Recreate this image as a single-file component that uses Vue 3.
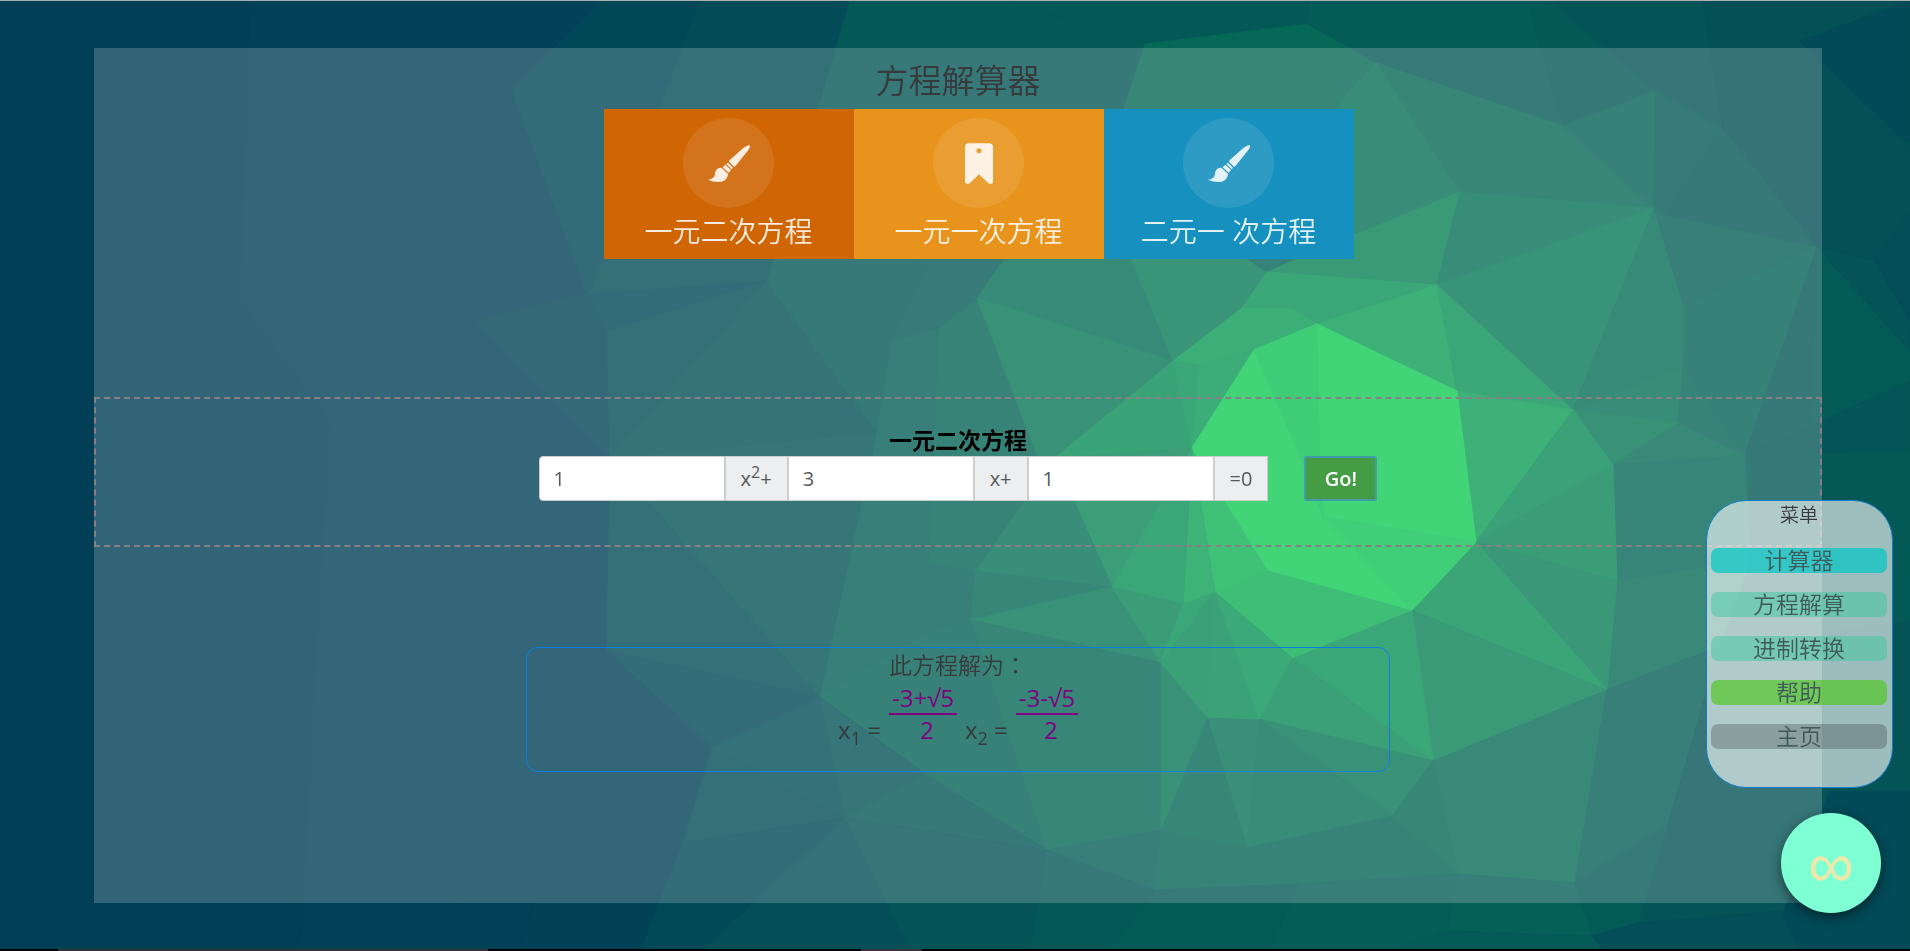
<script setup>
import { ref } from 'vue'

// Low-poly backdrop: each facet is a list of corners and a green level.
const facets = [
  ['600,0 1400,0 1400,760 900,760 600,600', 126],
  ['0,0 250,0 240,300 330,420 300,951 0,951', 101],
  ['250,0 600,0 512,90 587,292 475,320 610,457 607,650 440,951 300,951 330,420 240,300', 102],
  ['512,90 607,330 610,457 475,320 587,292', 105],
  ['250,0 600,0 512,90 440,200 300,120', 103],
  ['600,0 850,0 767,280 610,457 607,330 587,292 512,90', 108],
  ['700,0 850,0 767,280 590,292', 112],
  ['607,330 767,280 610,457', 112],
  ['610,457 607,650 820,696', 112],
  ['607,650 712,747 820,696', 109],
  ['440,951 607,650 712,747 683,842 640,951', 104],
  ['440,951 563,680 607,650 520,951', 103],
  ['712,747 845,817 820,696', 113],
  ['712,747 845,817 683,842', 112],
  ['683,842 845,817 700,951 640,951', 109],
  ['845,817 910,951 700,951', 113],
  ['850,0 1010,0 1145,43 1135,260 930,259 892,340 877,432 767,280', 121],
  ['767,280 877,432 610,457', 116],
  ['767,280 930,259 892,340 877,432', 122],
  ['610,457 877,432 820,696', 117],
  ['892,340 939,327 1055,457 976,570 971,619 930,640 820,696 877,432', 127],
  ['939,327 977,297 1055,457 976,570 930,560', 132],
  ['930,259 1040,240 977,297 939,327 892,340', 124],
  ['820,696 930,630 971,619 1047,849 925,773', 129],
  ['820,696 925,773 845,817', 117],
  ['845,817 925,773 1047,849', 121],
  ['845,817 1047,849 1030,951 910,951', 117],
  ['977,297 1010,250 1135,250 1173,360', 138],
  ['1120,230 1267,245 1267,271 1242,307 1173,360', 149],
  ['1220,240 1340,240 1267,271', 130],
  ['977,297 1173,360 1043,470', 146],
  ['1173,360 1192,447 1055,457', 163],
  ['1055,457 1192,447 1112,586', 158],
  ['1055,457 1112,586 976,570', 142],
  ['976,570 1112,586 971,619', 136],
  ['971,619 1112,586 1161,662', 146],
  ['971,619 1161,662 1161,829 1047,849', 134],
  ['1047,849 1161,829 1155,889', 128],
  ['1047,849 1155,889 1110,951 1030,951', 121],
  ['1161,829 1247,846 1393,814 1458,873 1299,883 1155,889', 132],
  ['1155,889 1299,883 1270,951 1110,951', 123],
  ['1299,883 1458,873 1448,930 1390,951 1270,951', 125],
  ['1010,0 1310,0 1308,23 1145,43', 121],
  ['1145,43 1308,23 1377,62 1354,120 1120,120', 134],
  ['1310,0 1528,0 1563,125 1377,62 1308,23', 124],
  ['1528,0 1703,7 1656,90 1563,125', 122],
  ['1550,0 1703,0 1723,128 1656,90', 117],
  ['1703,0 1910,0 1910,140 1817,246 1723,128', 115],
  ['1800,40 1910,0 1910,145', 110],
  ['1377,62 1460,191 1340,242 1340,100', 141],
  ['1377,62 1563,125 1654,207 1460,191', 134],
  ['1563,125 1656,90 1654,207', 129],
  ['1656,90 1723,128 1665,214 1654,207', 123],
  ['1723,128 1817,246 1665,214', 121],
  ['1460,191 1437,284 1267,271 1340,240', 154],
  ['1460,191 1654,207 1437,284', 141],
  ['1437,284 1654,207 1573,409', 147],
  ['1654,207 1684,305 1683,367 1573,409', 138],
  ['1654,207 1665,214 1817,246 1684,305', 127],
  ['1684,305 1817,246 1745,455 1683,367', 130],
  ['1817,246 1822,420 1745,455', 121],
  ['1817,246 1910,350 1910,380 1810,425', 123],
  ['1817,246 1875,259 1910,320 1910,350', 117],
  ['1910,140 1910,210 1875,259 1817,246', 115],
  ['1875,259 1910,210 1910,320', 113],
  ['1745,455 1822,420 1910,380 1910,450', 119],
  ['1745,455 1910,450 1910,620 1720,650 1750,560', 122],
  ['1573,409 1683,367 1678,422', 141],
  ['1683,367 1745,455 1678,422', 131],
  ['1573,409 1678,422 1613,464', 146],
  ['1678,422 1745,455 1613,464', 137],
  ['1613,464 1745,455 1750,560 1617,580', 133],
  ['1617,580 1750,560 1720,645 1607,689', 137],
  ['1242,307 1267,271 1437,284 1317,323 1293,308', 168],
  ['1173,360 1242,307 1293,308 1317,323 1254,349 1200,364', 174],
  ['1437,284 1457,390 1317,323', 177],
  ['1437,284 1573,409 1457,390', 167],
  ['1173,360 1200,364 1192,447', 167],
  ['1200,364 1254,349 1192,447', 173],
  ['1457,390 1573,409 1476,541', 177],
  ['1573,409 1613,464 1476,541', 161],
  ['1613,464 1617,580 1476,541', 157],
  ['1476,541 1617,580 1607,689', 151],
  ['1476,541 1607,689 1412,609', 165],
  ['1412,609 1607,689 1433,760', 154],
  ['1412,609 1433,760 1292,657', 167],
  ['1292,657 1433,760 1259,718', 160],
  ['1259,718 1433,760 1393,814', 146],
  ['1259,718 1393,814 1247,846', 141],
  ['1207,716 1259,718 1247,846', 144],
  ['1161,829 1207,716 1247,846', 136],
  ['1161,662 1207,716 1161,829', 145],
  ['1393,814 1433,760 1458,873', 136],
  ['1433,760 1607,689 1575,882 1458,873', 137],
  ['1607,689 1720,645 1668,823 1575,882', 127],
  ['1720,645 1910,620 1910,790 1830,800 1780,920 1638,922 1668,823', 118],
  ['1780,920 1830,790 1910,790 1910,951 1800,951', 110],
  ['1458,873 1575,882 1592,935 1448,930', 128],
  ['1575,882 1668,823 1638,922 1592,935', 123],
  ['1390,951 1448,930 1592,935 1605,951', 123],
  ['1592,935 1638,922 1780,910 1800,951 1605,951', 114],
  ['1268,569 1412,609 1292,657 1215,591', 190],
  ['1192,447 1268,569 1215,591', 194],
  ['1192,447 1215,591 1183,603', 180],
  ['1192,447 1183,603 1112,586', 166],
  ['1112,586 1183,603 1161,662', 157],
  ['1183,603 1215,591 1161,662', 168],
  ['1215,591 1207,716 1161,662', 159],
  ['1215,591 1259,718 1207,716', 162],
  ['1215,591 1292,657 1259,718', 169],
  ['1317,323 1457,390 1476,541 1412,609 1268,569 1192,447 1254,349', 213],
  ['1254,349 1317,323 1320,470 1323,516 1300,455', 205],
  ['1323,516 1476,541 1412,609', 206],
]

// Facet colours run from navy through teal to bright green.
function shade(level) {
  const green = Math.round((level - 51) / 0.8)
  const red = Math.round(Math.max(0, (green - 55) / 8))
  return `rgb(${red}, ${green}, 87)`
}

const kinds = [
  { label: '一元二次方程', tone: 'rust', icon: 'brush' },
  { label: '一元一次方程', tone: 'amber', icon: 'bookmark' },
  { label: '二元一 次方程', tone: 'blue', icon: 'brush' },
]

const menu = [
  { label: '计算器', tone: 'cyan' },
  { label: '方程解算', tone: 'mint' },
  { label: '进制转换', tone: 'mint' },
  { label: '帮助', tone: 'lime' },
  { label: '主页', tone: 'grey' },
]

const a = ref('1')
const b = ref('3')
const c = ref('1')
</script>

<template>
  <div class="page">
    <svg class="backdrop" viewBox="0 0 1910 951" preserveAspectRatio="xMidYMid slice" aria-hidden="true">
      <polygon
        v-for="(f, i) in facets"
        :key="i"
        :points="f[0]"
        :fill="shade(f[1])"
        :stroke="shade(f[1])"
        stroke-width="1"
      />
    </svg>

    <main class="panel">
      <h1 class="title">方程解算器</h1>
      <ul class="kinds">
        <li v-for="k in kinds" :key="k.label">
          <a href="#solver" class="kind" :class="k.tone">
            <span class="disc">
              <svg v-if="k.icon === 'brush'" class="brush" viewBox="0 0 126 111" aria-hidden="true">
                <path d="M126 1C121-1 113 4 105 10L68 43Q63 47 63 50L78 65Q82 65 85 60L121 15Q128 6 126 1Z" />
                <path d="M60 53L75 68L71 73L55 57Z" />
                <path d="M52 59L69 75L62 83L44 67Z" />
                <path d="M41 69L60 86Q60 98 48 107Q42 111 32 111Q14 111 0 104Q16 101 20 92C21 82 23 72 33 69Q37 67 41 69Z" />
              </svg>
              <svg v-else class="bookmark" viewBox="0 0 84 122" aria-hidden="true">
                <path fill-rule="evenodd" d="M12 0H72Q84 0 84 12V114Q84 122 76 122Q73 122 70 120L42 93L14 120Q11 122 8 122Q0 122 0 114V12Q0 0 12 0ZM42 15A7 7 0 1 0 42 30A7 7 0 1 0 42 15Z" />
              </svg>
            </span>
            <span class="kind-label">{{ k.label }}</span>
          </a>
        </li>
      </ul>

      <form id="solver" class="solver" @submit.prevent>
        <h2 class="solver-title">一元二次方程</h2>
        <div class="row">
          <div class="group">
            <input id="coef-a" v-model="a" class="coef" type="text" />
            <label class="addon" for="coef-a">x<sup>2</sup>+</label>
            <input id="coef-b" v-model="b" class="coef" type="text" />
            <label class="addon" for="coef-b">x+</label>
            <input id="coef-c" v-model="c" class="coef" type="text" />
            <label class="addon" for="coef-c">=0</label>
          </div>
          <button class="go" type="submit">Go!</button>
        </div>
      </form>

      <section class="result">
        <p class="result-title">此方程解为<span class="colon">：</span></p>
        <div class="roots">
          <span>x<sub>1</sub> =</span>
          <span class="fraction"><span class="over">-3+√5</span><span class="under">2</span></span>
          <span>x<sub>2</sub> =</span>
          <span class="fraction"><span class="over">-3-√5</span><span class="under">2</span></span>
        </div>
      </section>
    </main>

    <nav class="menu">
      <p class="menu-title">菜单</p>
      <a v-for="m in menu" :key="m.label" href="#solver" class="item" :class="m.tone">{{ m.label }}</a>
    </nav>
    <button class="fab" type="button">∞</button>
    <div class="edge"></div>
  </div>
</template>

<style>
body {
  margin: 0;
  background: #034a57;
}
</style>

<style scoped>
.page {
  position: relative;
  box-sizing: border-box;
  display: flex;
  min-height: 100vh;
  padding: 47px 88px 48px 94px;
  border-top: 1px solid #a9b0b0;
  font-family: "Open Sans", "Noto Sans CJK SC", sans-serif;
  font-weight: 350;
  color: #373a3c;
}
.backdrop {
  position: fixed;
  inset: 1px 0 0;
  width: 100%;
  height: 100%;
}
.panel {
  position: relative;
  flex: 1;
  padding-top: 13px;
  background: rgba(255, 255, 255, 0.2);
}
.title {
  margin: 0 0 8px;
  font-size: 33px;
  line-height: 40px;
  font-weight: 350;
  text-align: center;
}
.kinds {
  display: flex;
  justify-content: center;
  margin: 0 0 138px;
  padding: 0 0 0 41px;
  list-style: none;
}
.kind {
  box-sizing: border-box;
  display: flex;
  flex-direction: column;
  align-items: center;
  width: 250px;
  height: 150px;
  padding-top: 9px;
  color: rgba(255, 255, 255, 0.87);
  text-decoration: none;
}
.rust { background: #cf6503; }
.amber { background: #e8931b; }
.blue { background: #1690be; }
.disc {
  display: flex;
  align-items: center;
  justify-content: center;
  width: 91px;
  height: 90px;
  border-radius: 50%;
  background: rgba(255, 255, 255, 0.1);
}
.disc svg { fill: rgba(255, 255, 255, 0.87); }
.brush { width: 42px; height: 37px; }
.bookmark { width: 28px; height: 41px; }
.kind-label {
  margin-top: 5px;
  font-size: 28px;
  line-height: 36px;
}
.solver {
  padding: 26px 0 44px;
  border: 2px dashed #8a7f84;
}
.solver-title {
  margin: 0 0 1px;
  font-size: 23px;
  line-height: 30px;
  font-weight: 700;
  text-align: center;
  color: #000;
}
.row {
  display: flex;
  justify-content: center;
  gap: 36px;
  font-size: 20px;
}
.group {
  display: flex;
  height: 45px;
}
.coef,
.addon {
  box-sizing: border-box;
  border: 1px solid #ccc;
  color: #55595c;
}
.coef {
  width: 186px;
  padding: 0 14px;
  border-radius: 0;
  background: #fff;
  font: 400 20px "Open Sans", sans-serif;
}
.coef:first-child { border-radius: 4px 0 0 4px; }
.addon {
  padding: 0 15px;
  background: #eceeef;
  font-weight: 400;
  line-height: 43px;
}
sup,
sub {
  font-size: 16px;
  line-height: 0;
}
.go {
  width: 73px;
  height: 45px;
  padding: 0;
  border: 2px solid #419ba8;
  border-radius: 3px;
  background: #449d44;
  color: #fff;
  font: 600 20px "Open Sans", sans-serif;
}
.result {
  box-sizing: border-box;
  width: 50%;
  height: 125px;
  margin: 100px auto 0;
  border: 1px solid #0b7fe0;
  border-radius: 12px;
  text-align: center;
  font-size: 23px;
}
.result-title {
  margin: 0 0 2px;
  line-height: 32px;
}
.colon {
  font-family: "Noto Sans CJK TC", sans-serif;
}
.roots {
  display: flex;
  justify-content: center;
  align-items: last baseline;
  gap: 8px;
  font-size: 24px;
  line-height: 30px;
  font-weight: 400;
}
.roots sub { font-size: 18px; }
.fraction {
  display: flex;
  flex-direction: column;
  color: purple;
}
.over {
  padding: 0 3px;
  border-bottom: 2px solid purple;
}
.under { padding-left: 8px; }
.menu {
  position: fixed;
  right: 17px;
  bottom: 163px;
  box-sizing: border-box;
  display: flex;
  flex-direction: column;
  gap: 19px;
  width: 187px;
  height: 288px;
  padding: 0 5px 0 4px;
  border: 1px solid #147bc8;
  border-radius: 40px;
  background: rgba(255, 255, 255, 0.61);
  text-align: center;
}
.menu-title {
  margin: 0;
  font-size: 19px;
  line-height: 28px;
}
.item {
  border-radius: 7px;
  font-size: 23px;
  line-height: 25px;
  color: #3f5a5b;
  text-decoration: none;
}
.cyan { background: rgba(10, 198, 195, 0.74); }
.mint { background: rgba(60, 200, 158, 0.5); }
.lime { background: rgba(85, 200, 40, 0.7); }
.grey { background: rgba(0, 0, 0, 0.21); }
.fab {
  position: fixed;
  right: 29px;
  bottom: 38px;
  width: 100px;
  height: 100px;
  padding: 0;
  border: 0;
  border-radius: 50%;
  background: #7fffd4;
  box-shadow: 0 4px 12px rgba(0, 0, 0, 0.5);
  color: #eee8aa;
  font: 500 64px "Noto Sans", sans-serif;
  line-height: 96px;
}
.edge {
  position: fixed;
  right: 0;
  bottom: 0;
  left: 0;
  height: 2px;
  background: linear-gradient(90deg, #000 58px, #333 58px 488px, #000 488px 861px, #333 861px 922px, #000 922px);
}
</style>
